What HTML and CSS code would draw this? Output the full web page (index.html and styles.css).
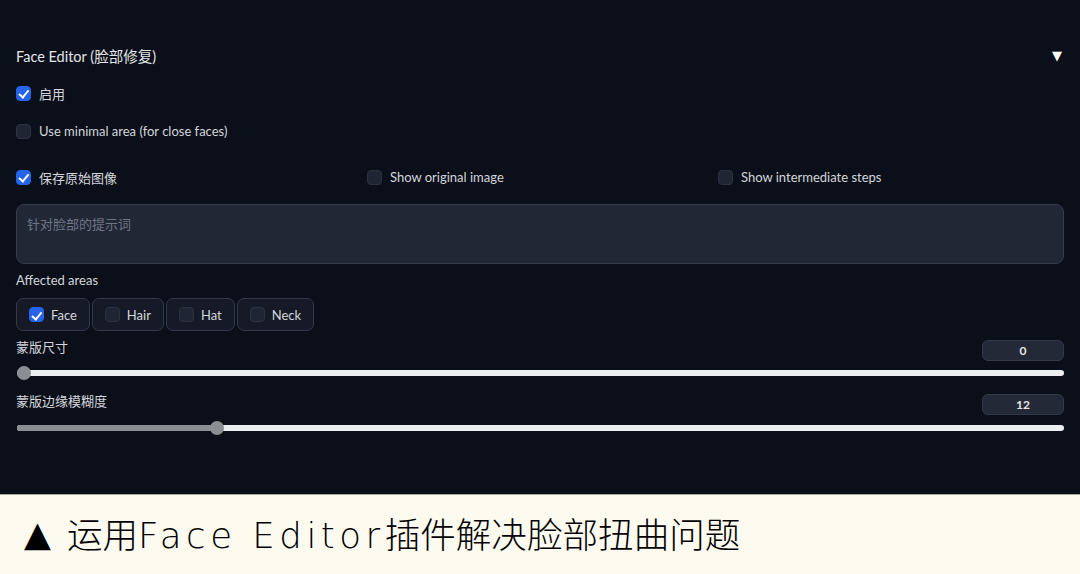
FILE: index.html
```html
<!DOCTYPE html>
<html lang="zh">
<head>
<meta charset="utf-8">
<title>Face Editor</title>
<link rel="stylesheet" href="styles.css">
</head>
<body>
<div class="page">
  <div class="acc-head">
    <span class="acc-title">Face Editor (脸部修复)</span>
    <span class="acc-arrow">▼</span>
  </div>

  <label class="check row-enable"><span class="box on"></span><span>启用</span></label>
  <label class="check row-minimal"><span class="box"></span><span>Use minimal area (for close faces)</span></label>

  <div class="three-col">
    <label class="check"><span class="box on"></span><span>保存原始图像</span></label>
    <label class="check"><span class="box"></span><span>Show original image</span></label>
    <label class="check"><span class="box"></span><span>Show intermediate steps</span></label>
  </div>

  <div class="prompt">针对脸部的提示词</div>

  <div class="label areas-label">Affected areas</div>
  <div class="areas">
    <label class="area"><span class="box on"></span><span>Face</span></label>
    <label class="area"><span class="box"></span><span>Hair</span></label>
    <label class="area"><span class="box"></span><span>Hat</span></label>
    <label class="area"><span class="box"></span><span>Neck</span></label>
  </div>

  <div class="slider-head first">
    <span class="label">蒙版尺寸</span>
    <span class="num">0</span>
  </div>
  <div class="track t1"><div class="fill" style="width:6px"></div><span class="thumb"></span></div>

  <div class="slider-head second">
    <span class="label">蒙版边缘模糊度</span>
    <span class="num">12</span>
  </div>
  <div class="track t2"><div class="fill" style="width:200px"></div><span class="thumb"></span></div>
</div>

<div class="caption">
  <span class="tri">▲</span>
  <span class="cap-text">运用<span class="latin">Face Editor</span>插件解决脸部扭曲问题</span>
</div>
</body>
</html>
```

FILE: styles.css
```css
* { box-sizing: border-box; }

html, body {
  margin: 0;
  padding: 0;
  background: #0b0f19;
}

body {
  width: 1080px;
  height: 574px;
  overflow: hidden;
  font-family: Lato, "Noto Sans CJK SC", sans-serif;
  color: #d6d9de;
}

.page {
  height: 494px;
  padding: 43px 16px 0 16px;
  display: flex;
  flex-direction: column;
}

.acc-head {
  height: 24px;
  display: flex;
  align-items: center;
  justify-content: space-between;
}

.acc-title {
  font-size: 14.5px;
  color: #e3e5e9;
}

.acc-arrow {
  font-family: "DejaVu Sans", sans-serif;
  font-size: 13px;
  color: #ffffff;
  margin-right: 2px;
}

.check {
  display: flex;
  align-items: center;
  gap: 8px;
  height: 20px;
  font-size: 13px;
  color: #d3d6dc;
}

.row-enable { margin-top: 16px; }
.row-minimal { margin-top: 18px; }

.box {
  width: 15px;
  height: 15px;
  border-radius: 4px;
  background: #1f2533;
  border: 1px solid #2b3242;
  flex: none;
  position: relative;
}

.box.on {
  background: #2563eb;
  border-color: #2563eb;
}

.box.on::after {
  content: "";
  position: absolute;
  left: 4px;
  top: 1.5px;
  width: 4px;
  height: 7.5px;
  border: solid #ffffff;
  border-width: 0 2px 2px 0;
  transform: rotate(40deg);
}

.three-col {
  margin-top: 26px;
  display: grid;
  grid-template-columns: 351px 351px 1fr;
}

.prompt {
  margin-top: 17px;
  height: 60px;
  border-radius: 8px;
  background: #222735;
  border: 1px solid #353c4b;
  padding: 9px 10px;
  font-size: 13px;
  color: #6f7685;
}

.label {
  font-size: 13px;
  color: #d3d6dc;
}

.areas-label {
  margin-top: 7px;
  height: 18px;
  line-height: 18px;
}

.areas {
  margin-top: 9px;
  display: flex;
  gap: 2px;
}

.area {
  height: 33px;
  display: flex;
  align-items: center;
  gap: 7px;
  padding: 0 12px 0 12px;
  border: 1px solid #323949;
  border-radius: 7px;
  background: #151a26;
  font-size: 13px;
  color: #d3d6dc;
}

.slider-head {
  display: flex;
  justify-content: space-between;
  align-items: flex-start;
  height: 21px;
}

.slider-head .label {
  line-height: 18px;
  margin-top: -2px;
}

.slider-head.first { margin-top: 9px; }
.slider-head.second { margin-top: 18px; }

.num {
  width: 82px;
  height: 21px;
  border-radius: 6px;
  background: #232937;
  border: 1px solid #333a4a;
  display: flex;
  align-items: center;
  justify-content: center;
  font-size: 12px;
  font-weight: 700;
  color: #e3e5e9;
}

.track {
  margin-top: 9px;
  height: 6px;
  border-radius: 3px;
  background: #eceef0;
  position: relative;
  margin-left: 1px;
}

.track.t2 { margin-top: 10px; }

.fill {
  height: 6px;
  border-radius: 3px;
  background: #8b8e93;
}

.thumb {
  position: absolute;
  top: -4px;
  width: 14px;
  height: 14px;
  border-radius: 50%;
  background: #8b8e93;
}

.t1 .thumb { left: 0; }
.t2 .thumb { left: 193px; }

.caption {
  height: 80px;
  background: #fdfbef;
  border-top: 1px solid #a9a79e;
  display: flex;
  align-items: center;
  padding-left: 24px;
  color: #000000;
}

.tri {
  font-family: "DejaVu Sans", sans-serif;
  font-size: 35px;
  margin-right: 16px;
  line-height: 1;
}

.cap-text {
  font-family: "Noto Sans CJK SC", sans-serif;
  font-size: 35.6px;
  font-weight: 300;
  line-height: 1;
}

.latin {
  font-family: "DejaVu Sans", sans-serif;
  font-weight: 200;
  letter-spacing: 4.5px;
}
```
